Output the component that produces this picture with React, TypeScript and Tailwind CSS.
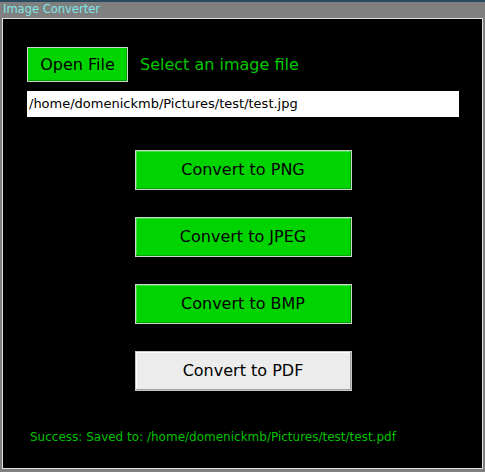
import React from "react";

const font = { fontFamily: '"DejaVu Sans", Verdana, sans-serif' };

function ConvBtn({ label, grey }: { label: string; grey?: boolean }) {
  return (
    <button
      className={
        grey
          ? "w-[217px] h-[40px] bg-[#ececec] border border-[#c8c8c8] shadow-[inset_-1px_-1px_0_#a0a0a0,inset_1px_1px_0_#ffffff] text-[16px] text-black"
          : "w-[217px] h-[40px] bg-[#00d400] border border-[#c8d8c8] shadow-[inset_-1px_-1px_0_#00a000,inset_1px_1px_0_#40e040] text-[16px] text-black"
      }
      style={font}
    >
      {label}
    </button>
  );
}

export default function App() {
  return (
    <div className="w-[485px] h-[472px] bg-[#808080] flex flex-col" style={font}>
      <div className="h-[2px] bg-[#2a4a60]" />
      <div className="h-[16px] flex items-center pl-[3px] text-[11.5px] text-[#7fe6e6] leading-none">
        Image Converter
      </div>
      <div className="mx-[2px] h-[451px] w-[481px] border border-[#e0e0e0] bg-black flex flex-col">
        <div className="flex items-center mt-[28px] ml-[24px] gap-[12px]">
          <button
            className="w-[101px] h-[35px] bg-[#00d400] border border-[#c8d8c8] shadow-[inset_-1px_-1px_0_#00a000] text-[16px] text-black"
            style={font}
          >
            Open File
          </button>
          <span className="text-[16px] text-[#00c800]">Select an image file</span>
        </div>
        <div className="mt-[9px] ml-[24px] w-[432px] h-[26px] bg-white flex items-center pl-[2px] text-[13px] text-black">
          /home/domenickmb/Pictures/test/test.jpg
        </div>
        <div className="flex flex-col items-center gap-[27px] mt-[33px] pl-[1px]">
          <ConvBtn label="Convert to PNG" />
          <ConvBtn label="Convert to JPEG" />
          <ConvBtn label="Convert to BMP" />
          <ConvBtn label="Convert to PDF" grey />
        </div>
        <div className="mt-[37px] ml-[27px] text-[12px] text-[#00c000]">
          Success: Saved to: /home/domenickmb/Pictures/test/test.pdf
        </div>
      </div>
    </div>
  );
}
